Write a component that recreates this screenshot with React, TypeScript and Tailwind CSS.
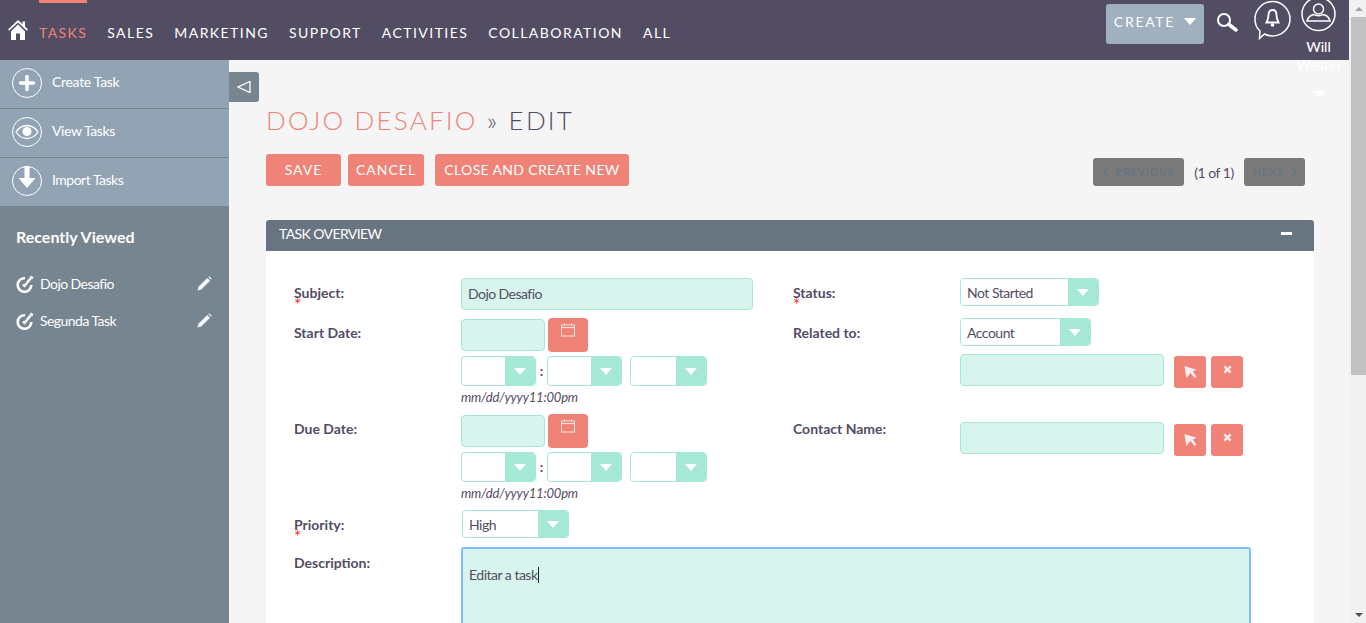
import React from 'react';

const navItems = ['SALES', 'MARKETING', 'SUPPORT', 'ACTIVITIES', 'COLLABORATION', 'ALL'];

const HomeIcon = () => (
    <svg viewBox="0 0 20 20" className="w-[20px] h-[20px] fill-white">
        <path d="M10 0 L14.5 4.2 V1.6 H17 V6.6 L20 9.6 L18.9 10.8 L10 2.6 L1.1 10.8 L0 9.6 Z" />
        <path d="M3 11.2 L10 4.6 L17 11.2 V20 H12 V13.5 H8 V20 H3 Z" />
    </svg>
);

const SearchIcon = () => (
    <svg viewBox="0 0 22 20" className="w-[22px] h-[20px] fill-none stroke-white">
        <circle cx="8" cy="8" r="6" strokeWidth="2" />
        <path d="M13 12.5 L20 18" strokeWidth="3.5" strokeLinecap="round" />
    </svg>
);

const BellIcon = () => (
    <svg viewBox="0 0 37 41" className="w-[37px] h-[41px] fill-none">
        <path d="M6 31 C2.5 28 1 23.500 1 19 C1 9.500 9 1.500 18.500 1.500 C28 1.500 36 9.500 36 19 C36 28.500 28 36 18.500 36 C15.500 36 13 35.500 10.500 34 L5.500 38.500 Z" stroke="white" strokeWidth="1.500" />
        <path d="M18.500 10 C15.800 10 14.500 12 14.500 15 C14.500 18.500 13.500 20.500 12.500 22.500 H24.500 C23.500 20.500 22.500 18.500 22.500 15 C22.500 12 21.200 10 18.500 10 Z" stroke="white" strokeWidth="1.800" />
        <circle cx="18.500" cy="25" r="1.800" fill="white" />
    </svg>
);

const UserIcon = () => (
    <svg viewBox="0 0 35 32" className="w-[35px] h-[32px] fill-none">
        <circle cx="17.500" cy="14" r="16.500" stroke="white" strokeWidth="1.500" />
        <circle cx="17.500" cy="9" r="5" stroke="white" strokeWidth="1.500" />
        <path d="M6 21 C7 17 10 15 13 14.500 C15 16 20 16 22 14.500 C25 15 28 17 29 21 Z" stroke="white" strokeWidth="1.500" />
    </svg>
);

const PlusCircle = () => (
    <svg viewBox="0 0 30 30" className="w-[30px] h-[30px] fill-none shrink-0">
        <circle cx="15" cy="15" r="14.500" stroke="white" />
        <path d="M15 8.500 V21.500 M8.500 15 H21.500" stroke="white" strokeWidth="3.500" strokeLinecap="round" />
    </svg>
);

const EyeCircle = () => (
    <svg viewBox="0 0 30 30" className="w-[30px] h-[30px] fill-none shrink-0">
        <circle cx="15" cy="15" r="14.500" stroke="white" />
        <path d="M4 15 C7 10.500 11 8.500 15 8.500 C19 8.500 23 10.500 26 15 C23 19.500 19 21.500 15 21.500 C11 21.500 7 19.500 4 15 Z" stroke="white" strokeWidth="1.300" />
        <circle cx="15" cy="14.500" r="4.500" fill="white" />
    </svg>
);

const DownCircle = () => (
    <svg viewBox="0 0 30 30" className="w-[30px] h-[30px] fill-none shrink-0">
        <circle cx="15" cy="15" r="14.500" stroke="white" />
        <path d="M12.500 0 H17.500 V12 H23.500 L15 22 L6.500 12 H12.500 Z" fill="white" />
    </svg>
);

const TaskIcon = () => (
    <svg viewBox="0 0 18 18" className="w-[18px] h-[18px] fill-none shrink-0">
        <path d="M15.300 10 A6.800 6.800 0 1 1 9 3.200" stroke="white" strokeWidth="2.600" />
        <path d="M7 9.500 L8.500 11 L14.500 3.500" stroke="white" strokeWidth="2.400" />
        <path d="M15 0.500 L17.500 2.500 L16 4.500 L13.500 2.500 Z" fill="white" />
    </svg>
);

const PencilIcon = () => (
    <svg viewBox="0 0 16 16" className="w-[15px] h-[15px] fill-[#f3f5f6] shrink-0">
        <path d="M0.500 15.500 L1.500 11.500 L11 2 L14 5 L4.500 14.500 Z" />
        <path d="M12 1 L13 0.300 L15.700 3 L15 4 Z" />
    </svg>
);

const CalendarIcon = () => (
    <svg viewBox="0 0 14 14" className="w-[14px] h-[14px] fill-none stroke-[#fbe3df]">
        <rect x="0.500" y="2" width="13" height="11" />
        <path d="M0.500 4.500 H13.500 M3.500 0 V2 M10.500 0 V2" />
    </svg>
);

const PickIcon = () => (
    <svg viewBox="0 0 14 14" className="w-[13px] h-[14px] fill-[#f7ecf0]">
        <path d="M0.500 0.500 L13.500 4.500 L9.500 6.500 L13.500 12 L11.500 13.500 L7 8 L2.500 13.500 Z" />
    </svg>
);

const CrossIcon = () => (
    <svg viewBox="0 0 10 10" className="w-[9px] h-[9px] stroke-[#f7ecf0] fill-none">
        <path d="M1.500 1.500 L8.500 8.500 M8.500 1.500 L1.500 8.500" strokeWidth="2.600" />
    </svg>
);

const Caret = () => (
    <span className="w-0 h-0 border-x-[6px] border-x-transparent border-t-[7px] border-t-white" />
);

const Label = ({ text, required }: { text: string; required?: boolean }) => (
    <div className="relative w-[167px] shrink-0 pt-[5px] text-[14px] leading-[20px] font-bold text-[#534d64]">
        {text}
        {required && (
            <span className="absolute left-0 top-[18px] text-[17px] leading-[18px] font-normal text-[#ff2a2a]">*</span>
        )}
    </div>
);

const TextInput = ({ value, className }: { value?: string; className: string }) => (
    <div className={`h-[32px] bg-[#d8f5ed] border border-[#a5e8d6] rounded-[4px] pl-[6px] text-[14px] tracking-[-0.55px] leading-[30px] text-[#534d64] ${className}`}>
        {value}
    </div>
);

const Select = ({ value, className }: { value?: string; className: string }) => (
    <div className={`flex bg-white border border-[#a5e8d6] rounded-[4px] overflow-hidden ${className}`}>
        <div className="flex-1 pl-[6px] text-[14px] tracking-[-0.5px] leading-[28px] text-[#534d64]">{value}</div>
        <div className="w-[30px] bg-[#a5e8d6] flex items-center justify-center">
            <Caret />
        </div>
    </div>
);

const DateField = () => (
    <div className="w-[332px] shrink-0">
        <div className="flex items-center gap-[3px]">
            <TextInput className="w-[84px]" />
            <button className="w-[40px] h-[34px] bg-[#f08377] rounded-[4px] flex justify-center pt-[5px]">
                <CalendarIcon />
            </button>
        </div>
        <div className="flex items-center mt-[4px]">
            <Select className="w-[75px] h-[30px]" />
            <span className="w-[11px] text-center text-[14px] font-bold leading-[30px] text-[#7a3b4a]">:</span>
            <Select className="w-[75px] h-[30px]" />
            <Select className="w-[77px] h-[30px] ml-[8px]" />
        </div>
        <div className="mt-[1px] text-[13px] tracking-[-0.18px] leading-[20px] italic text-[#534d64]">mm/dd/yyyy11:00pm</div>
    </div>
);

const RelateField = () => (
    <div className="flex items-start">
        <TextInput className="w-[204px]" />
        <button className="w-[32px] h-[32px] mt-[2px] ml-[10px] bg-[#f08377] rounded-[3px] flex items-center justify-center">
            <PickIcon />
        </button>
        <button className="w-[32px] h-[32px] mt-[2px] ml-[5px] bg-[#f08377] rounded-[3px] flex justify-center pt-[9px]">
            <CrossIcon />
        </button>
    </div>
);

const ActionButton = ({ text, className }: { text: string; className: string }) => (
    <button className={`h-[32px] pb-[2px] bg-[#f08377] rounded-[3px] text-white text-[14px] text-center ${className}`}>
        {text}
    </button>
);

const App: React.FC = () => {
    return (
        <div className="w-[1366px] h-[623px] flex overflow-hidden bg-[#f5f5f5] font-['Lato','Open_Sans',sans-serif]">
            <div className="w-[1349px] flex flex-col">
                {/* Top bar */}
                <header className="relative z-10 h-[60px] shrink-0 bg-[#534d64] flex">
                    <div className="pl-[8px] pt-[20px] w-[39px] shrink-0">
                        <HomeIcon />
                    </div>
                    <div className="h-[40px] border-t-[3px] border-[#f08377] pt-[20px] text-[14px] leading-[20px] tracking-[1.4px] text-[#f08377]">
                        TASKS
                    </div>
                    <nav className="flex gap-[20px] ml-[20px] pt-[23px] text-[14px] leading-[20px] tracking-[1.45px] text-white">
                        {navItems.map((item) => (
                            <span key={item}>{item}</span>
                        ))}
                    </nav>
                    <div className="ml-auto flex items-start">
                        <button className="mt-[4px] w-[98px] h-[40px] pb-[6px] bg-[#a0b0be] rounded-[3px] flex items-center justify-center gap-[9px] text-white text-[14px] tracking-[1.7px]">
                            CREATE
                            <Caret />
                        </button>
                        <div className="ml-[12px] mt-[12px]">
                            <SearchIcon />
                        </div>
                        <div className="ml-[16px]">
                            <BellIcon />
                        </div>
                        <div className="ml-[10px] mr-[13px] w-[35px] flex flex-col items-center">
                            <UserIcon />
                            <div className="mt-[6px] w-[60px] text-center text-[14px] leading-[18px] font-medium text-white">
                                Will Westin
                            </div>
                            <div className="mt-[17px] w-0 h-0 border-x-[7px] border-x-transparent border-t-[6px] border-t-white" />
                        </div>
                    </div>
                </header>

                <div className="flex-1 flex min-h-0">
                    {/* Sidebar */}
                    <aside className="w-[229px] shrink-0 bg-[#778591] text-white">
                        {[
                            { label: 'Create Task', icon: <PlusCircle />, spacing: 'tracking-[-0.3px]' },
                            { label: 'View Tasks', icon: <EyeCircle />, spacing: 'tracking-[-0.4px]' },
                            { label: 'Import Tasks', icon: <DownCircle />, spacing: 'tracking-[-0.5px]' },
                        ].map((item) => (
                            <div key={item.label} className="h-[49px] bg-[#92a4b4] border-b border-[#778591] last:border-b-0 flex items-center pl-[12px] pb-[3px] gap-[10px] text-[14px]">
                                {item.icon}
                                <span className={`pb-[2px] ${item.spacing}`}>{item.label}</span>
                            </div>
                        ))}
                        <div className="pl-[16px] pt-[20px] text-[16px] leading-[20px] font-bold">Recently Viewed</div>
                        <div className="pt-[18px] pl-[16px] pr-[17px]">
                            {['Dojo Desafio', 'Segunda Task'].map((name) => (
                                <div key={name} className="h-[37px] flex items-center gap-[6px] text-[14px] tracking-[-0.55px]">
                                    <TaskIcon />
                                    <span className="flex-1">{name}</span>
                                    <PencilIcon />
                                </div>
                            ))}
                        </div>
                    </aside>

                    {/* Main content */}
                    <main className="relative flex-1 min-w-0 pl-[37px] pr-[35px] overflow-hidden">
                        <button className="absolute left-0 top-[12px] w-[30px] h-[30px] bg-[#778591] rounded-r-[3px] flex items-center justify-center">
                            <svg viewBox="0 0 14 12" className="w-[14px] h-[12px] fill-none stroke-white">
                                <path d="M13 0.500 V11.500 L1 6 Z" strokeWidth="1.300" />
                            </svg>
                        </button>

                        <h2 className="pt-[43px] text-[26px] leading-[34px] font-light tracking-[2.2px] text-[#534d64]">
                            <span className="text-[#f08377]">DOJO DESAFIO</span> » EDIT
                        </h2>

                        <div className="mt-[17px] flex items-center">
                            <ActionButton text="SAVE" className="w-[75px] tracking-[1px]" />
                            <ActionButton text="CANCEL" className="w-[76px] ml-[7px] tracking-[1px]" />
                            <ActionButton text="CLOSE AND CREATE NEW" className="w-[194px] ml-[11px] tracking-[0.35px]" />
                            <div className="ml-auto mr-[9px] mt-[4px] flex items-center text-[14px] text-[#534d64]">
                                <div className="w-[91px] h-[28px] bg-[#7a7a7a] rounded-[3px] flex items-center justify-center gap-[7px] text-[11px] font-bold tracking-[0.6px] text-[#68747f]">
                                    <svg viewBox="0 0 6 10" className="w-[6px] h-[10px] fill-none stroke-[#68747f] stroke-[1.5]">
                                        <path d="M5 0.500 L1 5 L5 9.500" />
                                    </svg>
                                    PREVIOUS
                                </div>
                                <span className="w-[60px] text-center tracking-[-0.5px]">(1 of 1)</span>
                                <div className="w-[61px] h-[28px] bg-[#7a7a7a] rounded-[3px] flex items-center justify-center gap-[7px] text-[11px] font-bold tracking-[0.6px] text-[#68747f]">
                                    NEXT
                                    <svg viewBox="0 0 6 10" className="w-[6px] h-[10px] fill-none stroke-[#68747f] stroke-[1.5]">
                                        <path d="M1 0.500 L5 5 L1 9.500" />
                                    </svg>
                                </div>
                            </div>
                        </div>

                        {/* Panel */}
                        <section className="mt-[34px] bg-white">
                            <div className="h-[31px] pb-[4px] bg-[#68747f] rounded-t-[3px] flex items-center justify-between pl-[13px] pr-[22px] text-[14px] tracking-[-0.6px] text-white">
                                <span>TASK OVERVIEW</span>
                                <span className="w-[11px] h-[3px] bg-white" />
                            </div>
                            <div className="pt-[27px] pl-[28px] pr-[63px]">
                                <div className="flex h-[40px]">
                                    <Label text="Subject:" required />
                                    <div className="w-[332px] shrink-0">
                                        <TextInput value="Dojo Desafio" className="w-[292px]" />
                                    </div>
                                    <Label text="Status:" required />
                                    <Select value="Not Started" className="w-[139px] h-[28px]" />
                                </div>
                                <div className="flex h-[96px]">
                                    <Label text="Start Date:" />
                                    <DateField />
                                    <Label text="Related to:" />
                                    <div>
                                        <Select value="Account" className="w-[131px] h-[28px]" />
                                        <div className="mt-[8px]">
                                            <RelateField />
                                        </div>
                                    </div>
                                </div>
                                <div className="flex h-[96px]">
                                    <Label text="Due Date:" />
                                    <DateField />
                                    <Label text="Contact Name:" />
                                    <div className="pt-[8px]">
                                        <RelateField />
                                    </div>
                                </div>
                                <div className="flex h-[37px]">
                                    <Label text="Priority:" required />
                                    <Select value="High" className="w-[107px] h-[28px] ml-[1px]" />
                                </div>
                                <div className="flex">
                                    <div className="pt-[1px]">
                                        <Label text="Description:" />
                                    </div>
                                    <div className="w-[790px] h-[200px] shrink-0 bg-[#d8f5ed] border-2 border-[#80bdff] rounded-[3px] pl-[6px] pt-[16px] text-[14px] tracking-[-0.5px] leading-[20px] text-[#534d64]">
                                        Editar a task<span className="inline-block w-px h-[16px] bg-[#222222] align-[-3px]" />
                                    </div>
                                </div>
                            </div>
                        </section>
                    </main>
                </div>
            </div>

            {/* Page scrollbar */}
            <div className="w-[17px] shrink-0 bg-[#f1f1f1] flex flex-col items-end">
                <div className="w-[15px] h-[17px] flex items-center justify-center">
                    <span className="w-0 h-0 border-x-[4px] border-x-transparent border-b-[4px] border-b-[#a3a3a3]" />
                </div>
                <div className="w-[15px] h-[358px] bg-[#c1c1c1]" />
                <div className="w-[15px] mt-auto h-[17px] flex items-center justify-center">
                    <span className="w-0 h-0 border-x-[4px] border-x-transparent border-t-[4px] border-t-[#505050]" />
                </div>
            </div>
        </div>
    );
};

export default App;
